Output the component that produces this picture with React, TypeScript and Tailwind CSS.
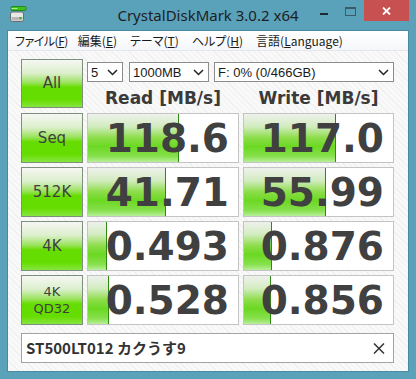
import React from 'react';

type Row = {
  label: string[];
  read: string;
  write: string;
  readBar: number;
  writeBar: number;
};

const rows: Row[] = [
  { label: ['Seq'], read: '118.6', write: '117.0', readBar: 92, writeBar: 93 },
  { label: ['512K'], read: '41.71', write: '55.99', readBar: 79, writeBar: 83 },
  { label: ['4K'], read: '0.493', write: '0.876', readBar: 20, writeBar: 29 },
  { label: ['4K', 'QD32'], read: '0.528', write: '0.856', readBar: 22, writeBar: 28 },
];

const uiFont = "font-['Liberation_Sans','Noto_Sans_CJK_JP',sans-serif]";

function Chevron() {
  return (
    <svg width="11" height="7" viewBox="0 0 11 7" className="shrink-0">
      <polyline points="1,1 5.5,5.5 10,1" fill="none" stroke="#222" strokeWidth="1.5" />
    </svg>
  );
}

function Select({ value, width, className = '' }: { value: string; width: string; className?: string }) {
  return (
    <div
      className={`${width} ${className} h-[20px] bg-white border border-[#8c8c8c] flex items-center justify-between pl-[3px] pr-[4px] text-[13px] text-[#1a1a1a] ${uiFont}`}
    >
      <span className="leading-none">{value}</span>
      <Chevron />
    </div>
  );
}

function TestButton({ lines, tall }: { lines: string[]; tall?: boolean }) {
  return (
    <div
      className={`w-[62px] ${tall ? 'h-[49px]' : 'h-[50px]'} border border-[#7e8f7e] bg-[linear-gradient(to_bottom,#f6f7f4_0%,#dcefcc_28%,#9be35e_48%,#66dd00_58%,#66dd00_84%,#86e540_100%)] flex flex-col items-center justify-center text-[#3f3f3f] font-['DejaVu_Sans',sans-serif] ${
        lines.length > 1 ? 'text-[13px] leading-[17px]' : 'text-[15px]'
      }`}
    >
      {lines.map((l) => (
        <span key={l}>{l}</span>
      ))}
    </div>
  );
}

function Cell({ value, bar, width }: { value: string; bar: number; width: string }) {
  return (
    <div className={`${width} h-[50px] relative bg-white border border-[#c4c4c4] flex items-center justify-end pr-[9px]`}>
      <div
        className="absolute left-0 top-0 bottom-0 border-r border-[#2f8a14] bg-[linear-gradient(to_bottom,#eef1ec_0%,#d2ecc0_26%,#8cdd48_50%,#6bd822_68%,#86e04c_88%,#b8ef9a_100%)]"
        style={{ width: bar - 1 }}
      />
      <span className="relative font-['DejaVu_Sans',sans-serif] font-bold text-[39px] leading-none text-[#404040]">
        {value}
      </span>
    </div>
  );
}

function AppIcon() {
  return (
    <svg width="17" height="17" viewBox="0 0 17 17">
      <rect x="1" y="0.5" width="15" height="4" rx="1" fill="#3cc21e" stroke="#1e7e10" strokeWidth="0.8" />
      <rect x="1.5" y="2" width="6" height="1" fill="#a6f08a" />
      <rect x="0.5" y="6" width="13" height="9.5" rx="2" fill="#e8e8e8" stroke="#6b6b6b" strokeWidth="1" />
      <rect x="1.5" y="11" width="11" height="3.5" fill="#b8b8b8" />
      <rect x="9.5" y="11" width="2" height="2" fill="#2fb41c" />
    </svg>
  );
}

export default function App() {
  return (
    <div className="w-[416px] h-[379px] bg-[#5aa1ba] flex flex-col overflow-hidden">
      {/* title bar */}
      <div className="h-[30px] grid grid-cols-[1fr_auto_1fr] shrink-0">
        <div className="pl-[10px] pt-[6px]">
          <AppIcon />
        </div>
        <div className="flex items-center pt-[1px] font-['Noto_Sans',sans-serif] text-[15px] text-[#1e1e1e] whitespace-nowrap">
          CrystalDiskMark 3.0.2 x64
        </div>
        <div className="flex justify-end items-start pr-[7px]">
          <div className="w-[26px] h-[21px] flex justify-center items-start pt-[13px]">
            <div className="w-[8px] h-[2px] bg-[#1e2a30]" />
          </div>
          <div className="w-[27px] h-[21px] flex justify-center items-start pt-[7px]">
            <div className="w-[11px] h-[9px] border border-t-2 border-[#3d5a66]" />
          </div>
          <div className="w-[45px] h-[21px] bg-[#c75050] flex items-center justify-center">
            <svg width="9" height="8" viewBox="0 0 9 8">
              <path d="M1 0.5 L8 7.5 M8 0.5 L1 7.5" stroke="#fff" strokeWidth="1.8" />
            </svg>
          </div>
        </div>
      </div>

      <div className="mx-[7px] mb-[7px] flex-1 flex flex-col border border-[#4a8ba3]">
        {/* menu bar */}
        <div className="h-[19px] bg-[linear-gradient(to_bottom,#ffffff,#f4f7fa)] flex items-center pl-[7px] gap-[13px] text-[12px] text-[#1a1a1a] font-['Noto_Sans_CJK_JP',sans-serif] [font-feature-settings:'palt'] leading-none">
          <span className="-mr-[3px] tracking-[-0.5px]">ファイル(<u>F</u>)</span>
          <span>編集(<u>E</u>)</span>
          <span>テーマ(<u>T</u>)</span>
          <span>ヘルプ(<u>H</u>)</span>
          <span>言語(<u>L</u>anguage)</span>
        </div>

        {/* client */}
        <div className="flex-1 border-t border-[#e6e6e6] bg-[#f8f8f8] bg-[repeating-linear-gradient(45deg,#f9f9f9_0px,#f9f9f9_3px,#f0f0f0_3px,#f0f0f0_4px)] pl-[13px] pt-[8px] flex flex-col">
          <div className="flex gap-[4px]">
            <TestButton lines={['All']} tall />
            <div className="w-[307px] flex flex-col">
              <div className="flex gap-[6px] mt-[3px]">
                <Select value="5" width="w-[36px]" />
                <Select value="1000MB" width="w-[80px]" />
                <Select value="F: 0% (0/466GB)" width="w-[180px]" className="-ml-px" />
              </div>
              <div className="flex gap-[4px] mt-[6px] font-['DejaVu_Sans',sans-serif] font-bold text-[17px] text-[#3a3a3a] leading-[20px]">
                <div className="w-[152px] text-center">Read [MB/s]</div>
                <div className="w-[151px] text-center">Write [MB/s]</div>
              </div>
            </div>
          </div>

          <div className="flex flex-col gap-[4px] mt-[5px]">
            {rows.map((r) => (
              <div key={r.read} className="flex gap-[4px]">
                <TestButton lines={r.label} />
                <Cell value={r.read} bar={r.readBar} width="w-[152px]" />
                <Cell value={r.write} bar={r.writeBar} width="w-[151px]" />
              </div>
            ))}
          </div>

          <div className="mt-[8px] w-[373px] h-[30px] bg-white border border-[#a3a3a3] flex items-center justify-between pl-[4px] pr-[8px]">
            <span className="font-['Noto_Sans_CJK_JP',sans-serif] font-bold text-[15px] text-[#333]">
              ST500LT012 カクうす9
            </span>
            <svg width="12" height="11" viewBox="0 0 12 11">
              <path d="M1 0.5 L11 10.5 M11 0.5 L1 10.5" stroke="#333" strokeWidth="1.5" />
            </svg>
          </div>
        </div>
      </div>
    </div>
  );
}
